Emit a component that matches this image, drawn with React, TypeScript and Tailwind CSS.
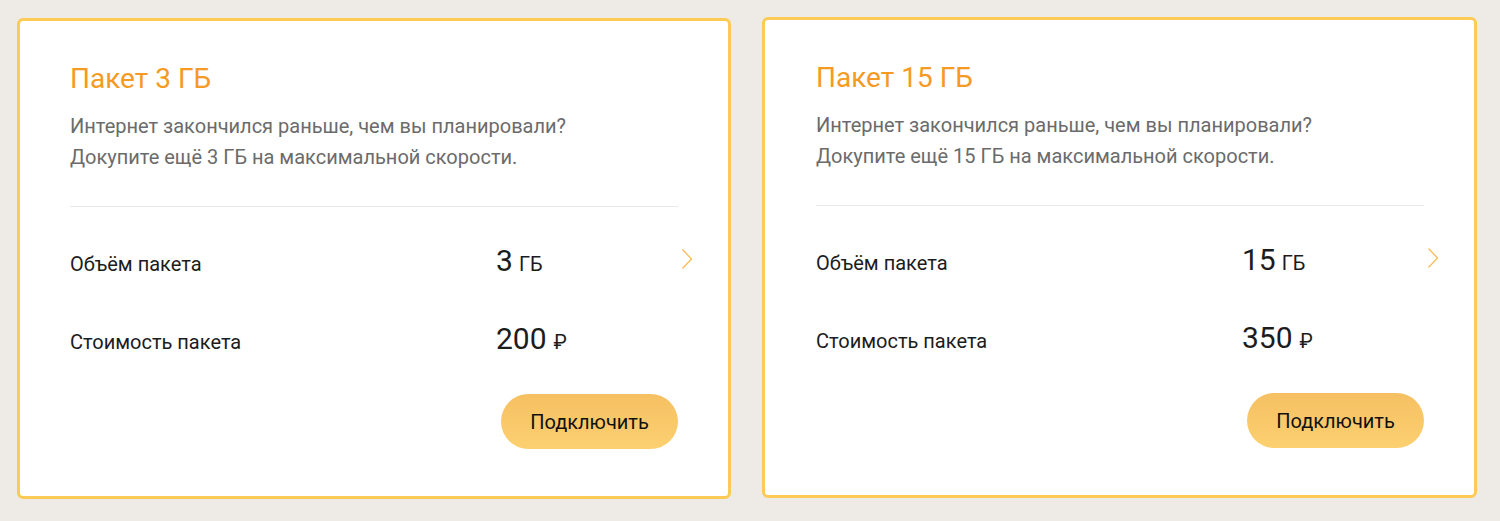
import React from "react";

type Pack = { gb: string; price: string };

function Chevron() {
  return (
    <svg width="12" height="22" viewBox="0 0 12 22" fill="none">
      <path d="M1.5 1.5 L10.5 11 L1.5 20.5" stroke="#f8bc55" strokeWidth="1.3" />
    </svg>
  );
}

function Card({ gb, price }: Pack) {
  return (
    <div className="relative w-[714px] h-[481px] shrink-0 rounded-[6px] border-[3px] border-[#fdcb55] bg-white pt-[40px] px-[50px] pb-[47px] flex flex-col">
      <div className="text-[28px] leading-[36px] text-[#f59a23]">Пакет {gb} ГБ</div>
      <div className="mt-[14px] text-[20px] leading-[31px] text-[#6b6b6b]">
        <div>Интернет закончился раньше, чем вы планировали?</div>
        <div>Докупите ещё {gb} ГБ на максимальной скорости.</div>
      </div>
      <div className="mt-[33px] h-px bg-[#e8e8e8]" />
      <div className="relative mt-[36px] flex items-baseline">
        <div className="w-[426px] text-[20px] leading-[36px] text-[#1c1c1c]">Объём пакета</div>
        <div className="text-[#1c1c1c] flex items-baseline">
          <span className="text-[30px] leading-[36px]">{gb}</span>
          <span className="ml-[6px] text-[20px] leading-[36px]">ГБ</span>
        </div>
        <div className="absolute right-[-15px] top-[5px]">
          <Chevron />
        </div>
      </div>
      <div className="mt-[39px] flex items-baseline">
        <div className="w-[426px] text-[20px] leading-[36px] text-[#1c1c1c]">Стоимость пакета</div>
        <div className="text-[#1c1c1c] flex items-baseline">
          <span className="text-[30px] leading-[36px]">{price}</span>
          <span className="ml-[7px] text-[20px] leading-[36px]">₽</span>
        </div>
      </div>
      <div className="mt-auto flex justify-end">
        <button className="h-[55px] w-[177px] rounded-full bg-gradient-to-b from-[#f5c062] to-[#fcd070] text-[20px] text-[#111]">
          Подключить
        </button>
      </div>
    </div>
  );
}

export default function App() {
  return (
    <div
      className="w-[1500px] h-[521px] bg-[#eeebe6] flex gap-[31px] pl-[17px] pt-[18px]"
      style={{ fontFamily: "Roboto, 'Noto Sans', sans-serif" }}
    >
      <Card gb="3" price="200" />
      <div className="-mt-px">
        <div className="w-[715px] [&>div]:w-[715px] [&>div]:pl-[51px]">
          <Card gb="15" price="350" />
        </div>
      </div>
    </div>
  );
}
